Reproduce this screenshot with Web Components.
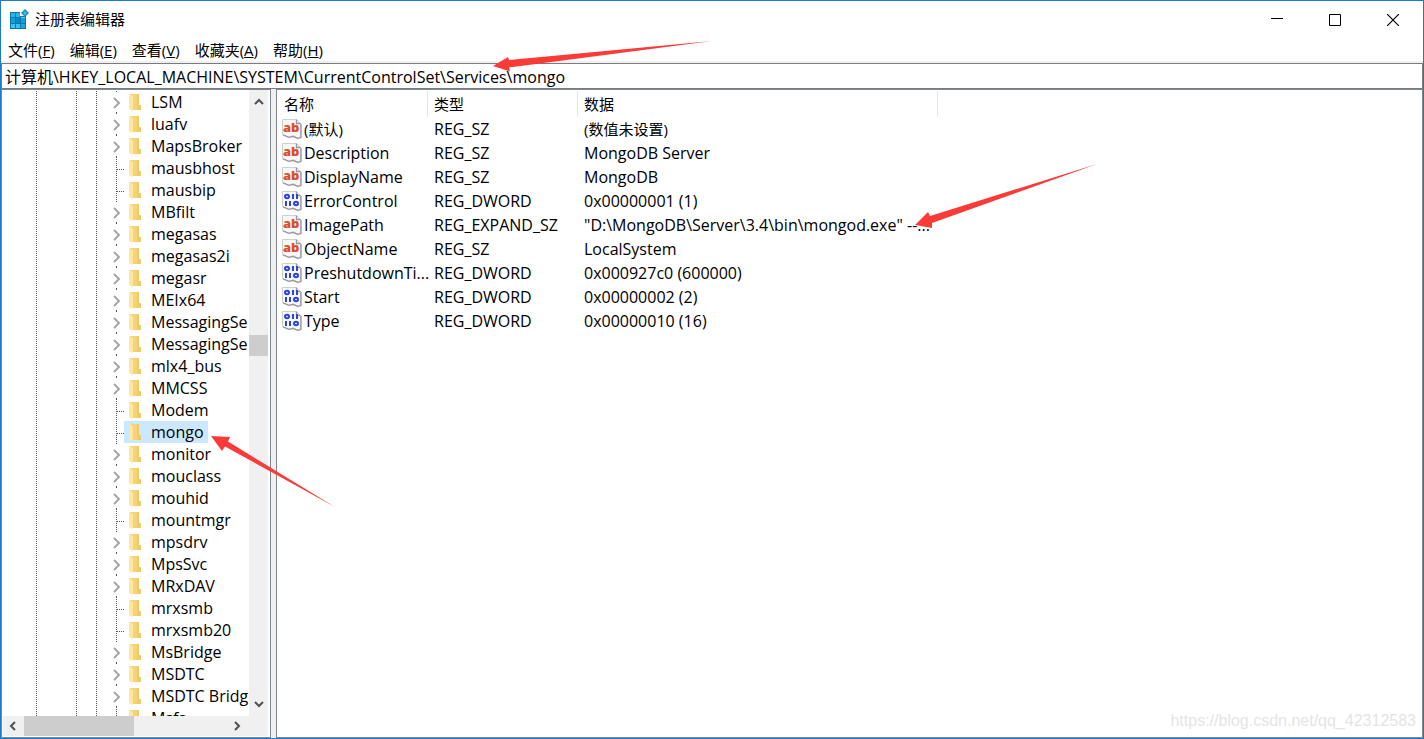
<!DOCTYPE html>
<html lang="zh-CN">
<head>
<meta charset="utf-8">
<title>注册表编辑器</title>
<style>
html, body { margin: 0; height: 100%; }
body { font: 16px/22px "Open Sans", "Noto Sans CJK SC", sans-serif; color: #000; background: #fff; overflow: hidden; }
</style>
</head>
<body>
<reg-editor></reg-editor>
<script>
const define = (name, html, setup) => {
  const tpl = document.createElement('template');
  tpl.innerHTML = `<style>*{box-sizing:border-box}button{font:inherit;color:inherit;background:none;border:0;padding:0;margin:0;display:flex;align-items:center;justify-content:center}svg{display:block;flex:none}</style>` + html;
  customElements.define(name, class extends HTMLElement {
    connectedCallback() {
      if (this.shadowRoot) return;
      const root = this.attachShadow({ mode: 'open' });
      root.append(tpl.content.cloneNode(true));
      if (setup) setup(root, this);
    }
  });
};

define('reg-titlebar', `
<style>
:host { display: flex; align-items: stretch; height: 37px; padding-right: 1px; font-size: 15px; }
.icon { margin: 7px 6px 0 8px; }
h1 { flex: 1; margin: 0; font: inherit; line-height: 37px; }
button { width: 58px; }
</style>
<svg class="icon" width="20" height="22" viewBox="0 0 20 22">
  <rect x="1" y="4" width="16" height="17" fill="#0878ad"/>
  <path d="M2 5h4v4H2zM7 5h4v4H7z" fill="#24b6e6"/><path d="M12 9h4v1h-4z" fill="#5ed1f2"/>
  <path d="M2 10h4v5H2zM12 10h4v5h-4z" fill="#149fd6"/><path d="M7 10h4v5H7z" fill="#0a8ac4"/>
  <path d="M2 16h4v4H2zM7 16h4v4H7z" fill="#36c5ef"/><path d="M12 16h4v4h-4z" fill="#1ba8dd"/>
  <path d="M11 4h6v4h-6z" fill="#fff"/><path d="M16 1l4 4-4 4-4-4z" fill="#188fc5"/><path d="M16 3l2 2-2 2-2-2z" fill="#49b9df"/>
</svg>
<h1><slot></slot></h1>
<button aria-label="最小化"><svg width="12" height="12"><path d="M0 4.500h12" stroke="#000"/></svg></button>
<button aria-label="最大化"><svg width="12" height="12"><path d="M.5.5h11v11H.5z" fill="none" stroke="#000"/></svg></button>
<button aria-label="关闭"><svg width="12" height="12"><path d="M0 0l12 12M12 0L0 12" stroke="#000" stroke-width="1.2"/></svg></button>
`);

define('reg-menu', `
<style>
:host { display: flex; gap: 15px; height: 23px; padding: 0 7px; font-size: 15px; }
</style>
<button><span>文件(<u>F</u>)</span></button>
<button><span>编辑(<u>E</u>)</span></button>
<button><span>查看(<u>V</u>)</span></button>
<button><span>收藏夹(<u>A</u>)</span></button>
<button><span>帮助(<u>H</u>)</span></button>
`);

define('reg-address', `
<style>
:host { display: block; border: 1px solid #7a7a7f; margin-top: 2px; }
input { display: block; width: 100%; height: 24px; border: 0; padding: 0 3px; margin: 0; font: inherit; color: inherit; background: #fff; outline: 0; }
</style>
<input aria-label="地址" spellcheck="false">
`, (root, host) => { root.querySelector('input').value = host.getAttribute('path'); });

define('reg-scrollbar', `
<style>
:host { display: flex; background: #f0f0f0; }
:host([vertical]) { flex-direction: column; width: 19px; }
:host(:not([vertical])) { height: 20px; }
button { width: 20px; height: 20px; flex: none; }
:host([vertical]) button { width: 19px; height: 24px; }
:host([vertical]) svg { transform: rotate(90deg); }
.before { flex: var(--before); } .thumb { flex: var(--thumb); background: #cdcdcd; } .after { flex: var(--after); }
</style>
<button aria-label="向前"><svg width="12" height="12"><path d="M8 2L4 6l4 4" fill="none" stroke="#505050" stroke-width="2"/></svg></button>
<div class="before"></div><div class="thumb"></div><div class="after"></div>
<button aria-label="向后"><svg width="12" height="12"><path d="M4 2l4 4-4 4" fill="none" stroke="#505050" stroke-width="2"/></svg></button>
`);

define('reg-key', `
<style>
:host { display: flex; height: 22px; white-space: nowrap; }
.guides { width: 122px; flex: none; }
.key { display: flex; align-items: center; padding: 0 4px 0 5px; gap: 10px; }
:host([selected]) .key { background: #cce8ff; }
</style>
<svg class="guides" width="122" height="22">
  <g stroke="#555" stroke-dasharray="1 1"><path d="M34.5 0v22M74.5 0v22M94.5 0v22"/><path class="branch"/></g>
  <path class="chevron" fill="none" stroke="#a6a6a6" stroke-width="2"/>
</svg>
<div class="key">
<svg width="12" height="18"><path d="M1 1h9v11h2v5H3z" fill="#f5d477"/><path d="M8 1h2v11h2v5H8z" fill="#efcb65"/><path d="M0 1l4 2v14l-1 1-3-2z" fill="#fde7a2"/></svg>
<span><slot></slot></span>
</div>
`, (root, host) => {
  const leaf = host.hasAttribute('leaf');
  root.querySelector('.branch').setAttribute('d', leaf ? 'M114.5 0v22M115 12.5h7' : 'M114.5 0v2M114.5 21v1');
  if (!leaf) root.querySelector('.chevron').setAttribute('d', 'M112 7l5 5-5 5');
});

define('reg-tree', `
<style>
:host { display: flex; flex-direction: column; width: 270px; flex: none; min-height: 0; border: 1px solid #7f8790; padding-bottom: 1px; }
.top { display: flex; flex: 1; min-height: 0; padding-right: 2px; }
.keys { flex: 1; min-width: 0; overflow: hidden; padding-top: 1px; }
.v { --before: 221; --thumb: 21; --after: 335; }
.h { --before: 1; --thumb: 111; --after: 93; margin: 0 21px 0 0; }
.foot { background: #f0f0f0; margin: 0 2px 0 1px; }
</style>
<div class="top"><div class="keys"></div><reg-scrollbar class="v" vertical></reg-scrollbar></div>
<div class="foot"><reg-scrollbar class="h"></reg-scrollbar></div>
`, root => {
  // A leading "-" marks a key without subkeys, "*" the selected one.
  const names = 'LSM|luafv|MapsBroker|-mausbhost|-mausbip|MBfilt|megasas|megasas2i|megasr|MEIx64|MessagingSe|MessagingSe|mlx4_bus|MMCSS|-Modem|*mongo|monitor|mouclass|mouhid|-mountmgr|mpsdrv|MpsSvc|MRxDAV|-mrxsmb|-mrxsmb20|MsBridge|MSDTC|MSDTC Bridg|-Msfs';
  const box = root.querySelector('.keys');
  for (const n of names.split('|')) {
    const k = document.createElement('reg-key');
    if (/^[-*]/.test(n)) k.setAttribute('leaf', '');
    if (n[0] === '*') k.setAttribute('selected', '');
    k.textContent = n.replace(/^[-*]/, '');
    box.append(k);
  }
});

define('reg-type-icon', `
<style>
:host { display: block; flex: none; width: 20px; height: 20px; }
g { display: none; }
:host([kind=text]) .text, :host([kind=number]) .number { display: block; }
text { font: 800 13px "Open Sans", sans-serif; fill: #d9512c; }
</style>
<svg width="20" height="20" aria-hidden="true">
  <path d="M.5.5h14l4 4v14l-3 1-5-2-4 1-6-3z" fill="#f7f7f7" stroke="#cfcfcf"/>
  <path d="M14.500.5v4h4M19 5v13.500l-3 .8-5-2-4 1-6-2.500" fill="none" stroke="#999" stroke-width="1.300"/>
  <g class="text"><text x="1" y="13">ab</text></g>
  <g class="number" fill="none" stroke="#2b46d9" stroke-width="2">
    <ellipse cx="5" cy="5.500" rx="2" ry="1.700"/><path d="M11 3v5M15 3v5M4 10v5M8 10v5"/><ellipse cx="14" cy="12.500" rx="2" ry="1.700"/>
  </g>
</svg>
`);

define('reg-values', `
<style>
:host { display: block; flex: 1; min-width: 0; border: 1px solid #7f8790; padding-top: 1px; overflow: hidden; }
table { table-layout: fixed; border-collapse: separate; border-spacing: 0; width: 100%; line-height: 24px; }
.name { width: 151px; } .type { width: 150px; } .data { width: 360px; }
th, td { padding: 0 0 0 6px; font-weight: 400; text-align: left; white-space: nowrap; height: 24px; }
th { height: 26px; border-right: 1px solid #e5e5e5; font-size: 15px; }
th:first-child { padding-left: 7px; }
th:last-child { border: 0; }
td:first-child { padding-left: 5px; }
.cell { display: flex; align-items: center; gap: 2px; height: 24px; }
.zh { font-size: 15px; }
</style>
<table>
<colgroup><col class="name"><col class="type"><col class="data"><col></colgroup>
<thead><tr><th>名称</th><th>类型</th><th>数据</th><th></th></tr></thead>
<tbody></tbody>
</table>
`, root => {
  const rows = [
    ['(默认)', 'REG_SZ', '(数值未设置)'],
    ['Description', 'REG_SZ', 'MongoDB Server'],
    ['DisplayName', 'REG_SZ', 'MongoDB'],
    ['ErrorControl', 'REG_DWORD', '0x00000001 (1)'],
    ['ImagePath', 'REG_EXPAND_SZ', '"D:\\MongoDB\\Server\\3.4\\bin\\mongod.exe" --...'],
    ['ObjectName', 'REG_SZ', 'LocalSystem'],
    ['PreshutdownTi...', 'REG_DWORD', '0x000927c0 (600000)'],
    ['Start', 'REG_DWORD', '0x00000002 (2)'],
    ['Type', 'REG_DWORD', '0x00000010 (16)']
  ];
  const zh = s => /[\u4e00-\u9fff]/.test(s) ? ' class="zh"' : '';
  root.querySelector('tbody').innerHTML = rows.map(([n, t, d]) =>
    `<tr><td><div class="cell"><reg-type-icon kind="${t === 'REG_DWORD' ? 'number' : 'text'}"></reg-type-icon><span${zh(n)}>${n}</span></div></td><td>${t}</td><td${zh(d)}>${d}</td><td></td></tr>`).join('');
});

define('reg-annotations', `
<style>
:host { position: absolute; inset: -1px; pointer-events: none; overflow: hidden; }
svg { position: absolute; left: 0; top: 0; }
.mark { position: absolute; right: 8px; bottom: 6px; font: 16px/24px "Liberation Sans", Arial, sans-serif; color: #e4e4e4; }
</style>
<svg width="1100" height="520" aria-hidden="true" fill="#fc3a37">
  <path d="M493 66L508 57L509 60L712 41L509 67.500L510 71.500Z"/>
  <path d="M915 225L928 212L930 216L1097 164L932 223L932 228Z"/>
  <path d="M211 436L230 437L228 441.500L335 507L225 446.500L222 451Z"/>
</svg>
<div class="mark"><slot></slot></div>
`);

define('reg-editor', `
<style>
:host { display: flex; flex-direction: column; position: relative; height: 100vh; box-sizing: border-box; border: 1px solid #1a7ad0; background: #f0f0f0; }
reg-titlebar, reg-menu { background: #fff; }
.panes { display: flex; flex: 1; min-height: 0; gap: 5px; }
reg-tree, reg-values { background: #fff; box-sizing: border-box; }
</style>
<reg-titlebar>注册表编辑器</reg-titlebar>
<reg-menu></reg-menu>
<reg-address path="计算机\\HKEY_LOCAL_MACHINE\\SYSTEM\\CurrentControlSet\\Services\\mongo"></reg-address>
<div class="panes"><reg-tree></reg-tree><reg-values></reg-values></div>
<reg-annotations>https://blog.csdn.net/qq_42312583</reg-annotations>
`);
</script>
</body>
</html>
